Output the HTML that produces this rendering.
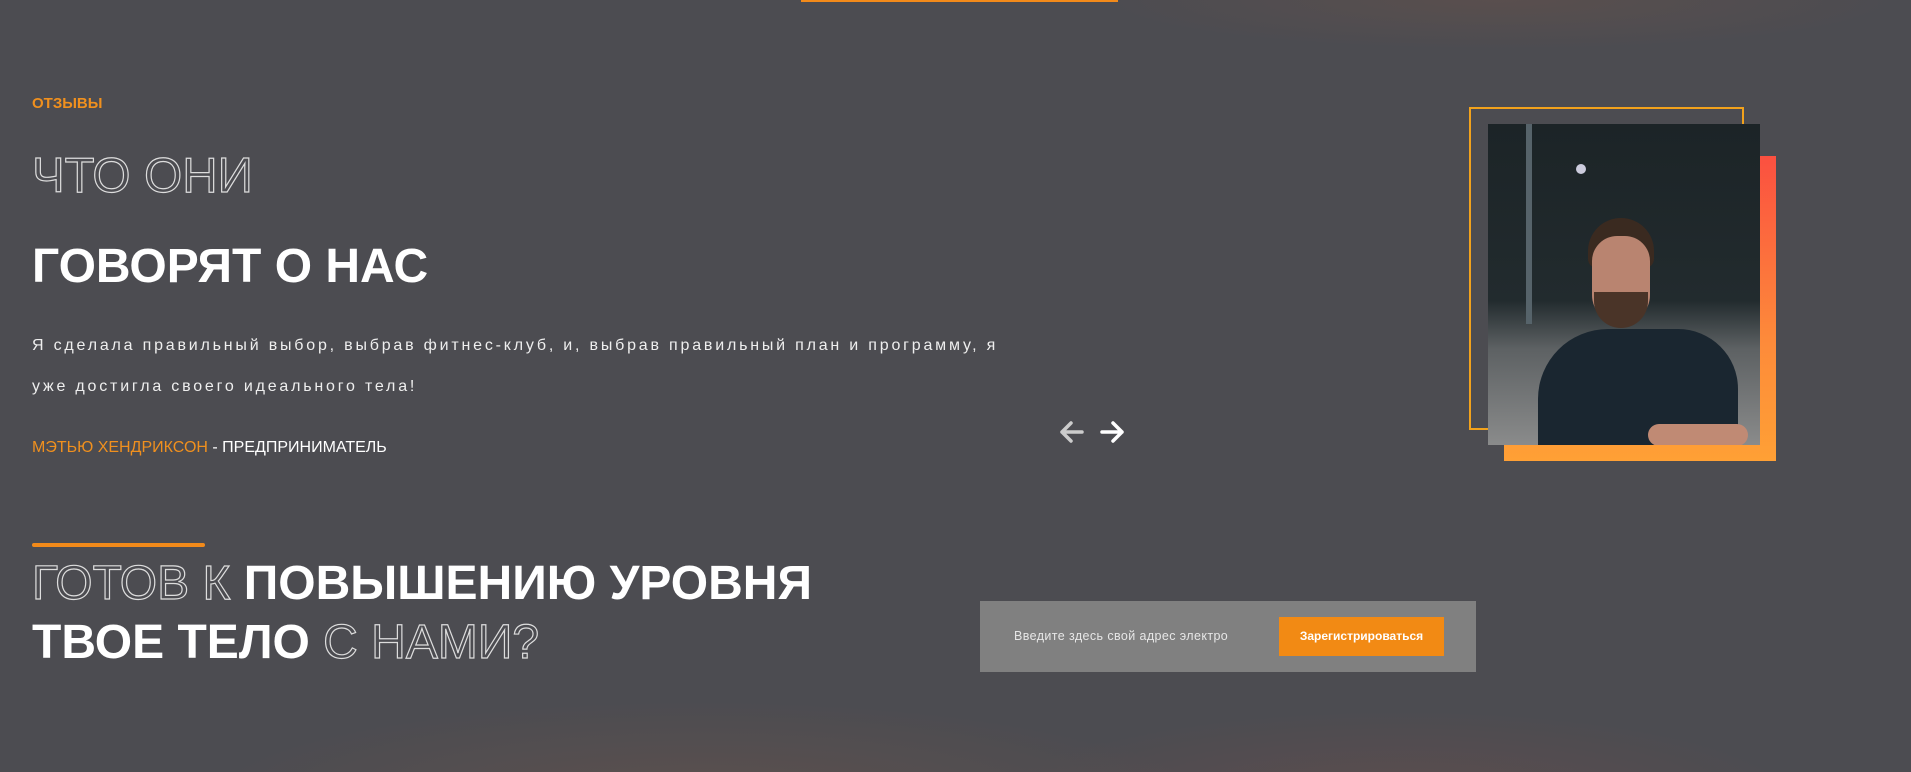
<!DOCTYPE html>
<html><head><meta charset="utf-8"><style>
*{margin:0;padding:0;box-sizing:border-box}
body{width:1911px;height:772px;overflow:hidden;position:relative;font-family:"Liberation Sans","DejaVu Sans",sans-serif;
background:radial-gradient(ellipse 500px 100px at 700px 800px,rgba(130,90,70,.3),transparent),radial-gradient(ellipse 400px 90px at 1400px 800px,rgba(130,80,70,.3),transparent),radial-gradient(ellipse 400px 50px at 1500px 0,rgba(120,85,70,.3),transparent),#4c4c51;color:#fff}
.a{position:absolute;white-space:nowrap}
.o{color:transparent;-webkit-text-stroke:1.2px #ddd}
.h{font-weight:700;font-size:48px;letter-spacing:0}
</style></head><body>
<div class="a" style="left:801px;top:0;width:317px;height:2px;background:#f28a1a"></div>
<div class="a" style="left:32px;top:95px;font-size:15px;font-weight:700;color:#f0901e">ОТЗЫВЫ</div>
<div class="a h o" style="left:32px;top:148px;font-weight:400;font-size:49px">ЧТО ОНИ</div>
<div class="a h" style="left:32px;top:239px">ГОВОРЯТ О НАС</div>
<div class="a" style="left:32px;top:337px;font-size:16px;letter-spacing:2.8px;color:#eee">Я сделала правильный выбор, выбрав фитнес-клуб, и, выбрав правильный план и программу, я</div>
<div class="a" style="left:32px;top:378px;font-size:16px;letter-spacing:2.8px;color:#eee">уже достигла своего идеального тела!</div>
<div class="a" style="left:32px;top:439px;font-size:16px;color:#f0901e">МЭТЬЮ ХЕНДРИКСОН <span style="color:#fff">- ПРЕДПРИНИМАТЕЛЬ</span></div>
<svg class="a" style="left:1058px;top:418px" width="70" height="28" viewBox="0 0 70 28" fill="none" stroke-width="3.5" stroke-linecap="round" stroke-linejoin="round"><path d="M24 14H4M13 5L4 14L13 23" stroke="#ccc"/><path d="M44 14H64M55 5L64 14L55 23" stroke="#fff"/></svg>
<div class="a" style="left:1469px;top:107px;width:275px;height:323px;border:2px solid #f2a21c"></div>
<div class="a" style="left:1504px;top:156px;width:272px;height:305px;background:linear-gradient(180deg,#fb5040,#fd8a3a 60%,#ffa035)"></div>
<div class="a" style="left:1488px;top:124px;width:272px;height:321px;overflow:hidden;background:linear-gradient(180deg,#1c2427 0%,#222b2e 55%,#5d6163 70%,#8a8b8b 100%)">
<div class="a" style="left:38px;top:0;width:6px;height:200px;background:#56636a"></div>
<div class="a" style="left:88px;top:40px;width:10px;height:10px;border-radius:50%;background:#ccd"></div>
<div class="a" style="left:100px;top:94px;width:66px;height:50px;border-radius:36px 36px 10px 10px;background:#3a2a20"></div>
<div class="a" style="left:104px;top:112px;width:58px;height:88px;border-radius:26px 26px 30px 30px;background:#b98470"></div>
<div class="a" style="left:106px;top:168px;width:54px;height:36px;border-radius:0 0 28px 28px;background:#4a3428"></div>
<div class="a" style="left:50px;top:205px;width:200px;height:140px;border-radius:70px 60px 0 0;background:#1a2630"></div>
<div class="a" style="left:160px;top:300px;width:100px;height:22px;border-radius:12px;background:#c08a74"></div>
</div>
<div class="a" style="left:32px;top:543px;width:173px;height:4px;border-radius:2px;background:#f28a1a"></div>
<div class="a h" style="left:32px;top:556px"><span class="o" style="font-weight:400">ГОТОВ К</span> ПОВЫШЕНИЮ УРОВНЯ</div>
<div class="a h" style="left:32px;top:615px">ТВОЕ ТЕЛО <span class="o" style="font-weight:400">С НАМИ?</span></div>
<div class="a" style="left:980px;top:601px;width:496px;height:71px;background:#808080"></div>
<div class="a" style="left:1014px;top:629px;width:215px;overflow:hidden;font-size:12.5px;letter-spacing:.4px;color:#e6e6e6">Введите здесь свой адрес электронной почты</div>
<div class="a" style="left:1279px;top:617px;width:165px;height:39px;background:#f28a14;font-size:12px;font-weight:700;text-align:center;line-height:39px">Зарегистрироваться</div>
</body></html>
